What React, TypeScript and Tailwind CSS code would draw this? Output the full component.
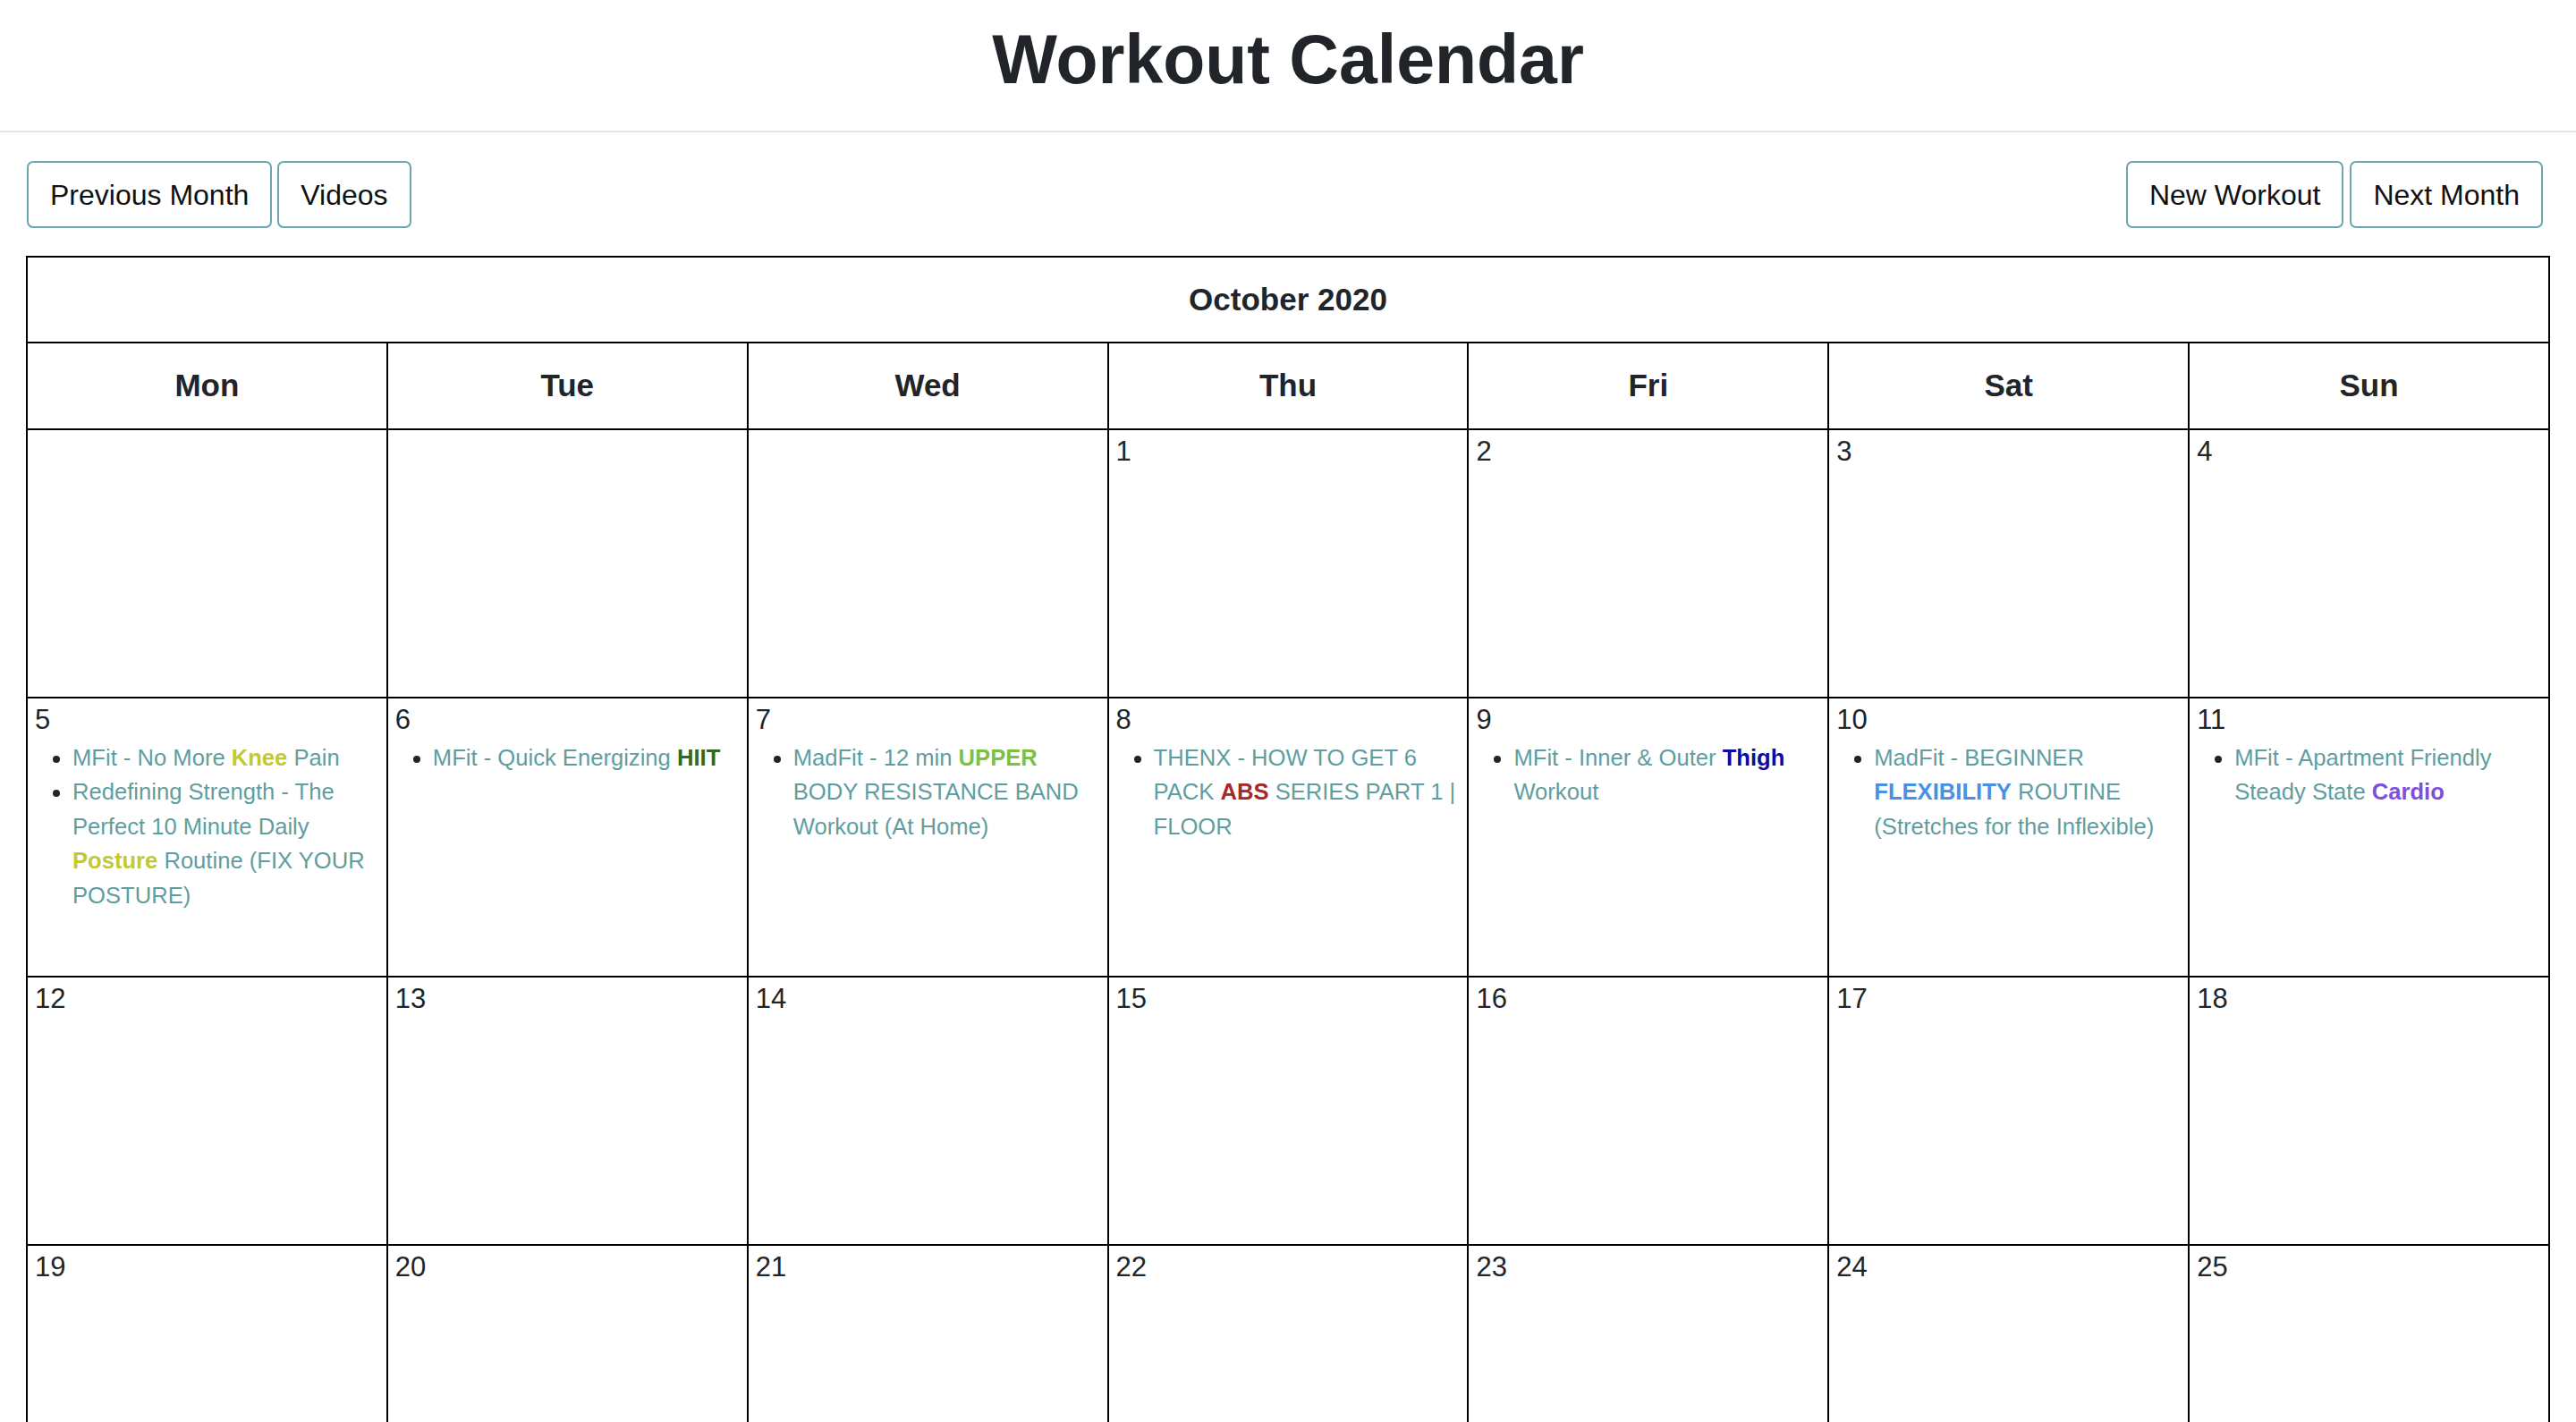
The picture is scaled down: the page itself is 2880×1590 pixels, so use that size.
import type { ReactNode } from 'react'

type Part = string | { word: string; color: string }

const weeks: (number | null)[][] = [
  [null, null, null, 1, 2, 3, 4],
  [5, 6, 7, 8, 9, 10, 11],
  [12, 13, 14, 15, 16, 17, 18],
  [19, 20, 21, 22, 23, 24, 25],
  [26, 27, 28, 29, 30, 31, null],
]

const rowHeights = ['h-[300px]', 'h-[312px]', 'h-[300px]', 'h-[300px]', 'h-[300px]']

const days = ['Mon', 'Tue', 'Wed', 'Thu', 'Fri', 'Sat', 'Sun']

// workouts keyed by day of month, the keyword is highlighted
const workouts: Record<number, Part[][]> = {
  5: [
    ['MFit - No More ', { word: 'Knee', color: 'text-[#c3c936]' }, ' Pain'],
    [
      'Redefining Strength - The Perfect 10 Minute Daily ',
      { word: 'Posture', color: 'text-[#c3c936]' },
      ' Routine (FIX YOUR POSTURE)',
    ],
  ],
  6: [['MFit - Quick Energizing ', { word: 'HIIT', color: 'text-[#2f6a1e]' }]],
  7: [['MadFit - 12 min ', { word: 'UPPER', color: 'text-[#7cc242]' }, ' BODY RESISTANCE BAND Workout (At Home)']],
  8: [['THENX - HOW TO GET 6 PACK ', { word: 'ABS', color: 'text-[#a82828]' }, ' SERIES PART 1 | FLOOR']],
  9: [['MFit - Inner & Outer ', { word: 'Thigh', color: 'text-[#0c0ca2]' }, ' Workout']],
  10: [['MadFit - BEGINNER ', { word: 'FLEXIBILITY', color: 'text-[#4591e6]' }, ' ROUTINE (Stretches for the Inflexible)']],
  11: [['MFit - Apartment Friendly Steady State ', { word: 'Cardio', color: 'text-[#7b50dc]' }]],
}

function Button({ children }: { children: ReactNode }) {
  return (
    <button className="h-[75px] px-[24px] rounded-[7px] border-2 border-[#6aa5b0] bg-white text-[32px] leading-none text-[#111]">
      {children}
    </button>
  )
}

function DayCell({ day, height }: { day: number | null; height: string }) {
  const items = day ? workouts[day] : undefined
  return (
    <div className={`${height} border-l-2 border-t-2 border-black pt-[1px] pl-[6px] pr-[6px]`}>
      {day && <div className="pl-[2px] text-[31px] leading-[45px] text-[#212529]">{day}</div>}
      {items && (
        <ul className="mt-[1px] list-disc pl-[44px] text-[25.6px] leading-[38.4px] text-[#212529]">
          {items.map((parts, i) => (
            <li key={i}>
              <a href="#" className="text-[#5f9ea0]">
                {parts.map((p, j) =>
                  typeof p === 'string' ? (
                    <span key={j}>{p}</span>
                  ) : (
                    <b key={j} className={`font-bold ${p.color}`}>
                      {p.word}
                    </b>
                  ),
                )}
              </a>
            </li>
          ))}
        </ul>
      )}
    </div>
  )
}

export default function App() {
  return (
    <div className="min-h-screen bg-white font-['Liberation_Sans',Arial,sans-serif] text-[#212529]">
      <header className="h-[148px] border-b-2 border-[#e6e6e6] pt-[28px]">
        <h1 className="text-center text-[77px] leading-none font-bold">Workout Calendar</h1>
      </header>

      <main className="px-[29px]">
        <div className="mt-[32px] flex items-center justify-between">
          <div className="ml-[1px] flex gap-[6px]">
            <Button>Previous Month</Button>
            <Button>Videos</Button>
          </div>
          <div className="mr-[8px] flex gap-[7px]">
            <Button>New Workout</Button>
            <Button>Next Month</Button>
          </div>
        </div>

        <div className="mt-[31px] grid grid-cols-7 border-r-2 border-b-2 border-black">
          <div className="col-span-7 h-[96px] flex items-center justify-center border-l-2 border-t-2 border-black text-[35px] font-bold">
            October 2020
          </div>
          {days.map((d) => (
            <div
              key={d}
              className="h-[97px] flex items-center justify-center border-l-2 border-t-2 border-black text-[35px] font-bold"
            >
              {d}
            </div>
          ))}
          {weeks.map((week, w) =>
            week.map((day, i) => <DayCell key={`${w}-${i}`} day={day} height={rowHeights[w]} />),
          )}
        </div>
      </main>
    </div>
  )
}
